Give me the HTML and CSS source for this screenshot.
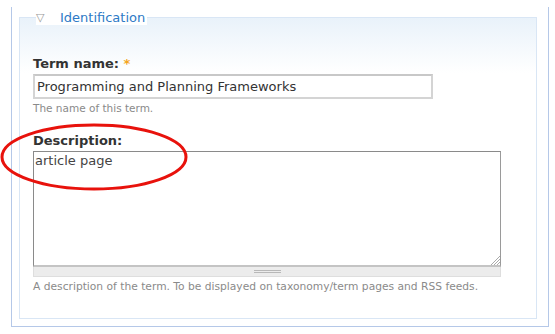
FILE: index.html
```html
<!DOCTYPE html>
<html>
<head>
<meta charset="utf-8">
<link rel="stylesheet" href="styles.css">
</head>
<body>
<div class="outer">
  <fieldset class="group">
    <legend class="legend"><span class="tri">&#9661;</span><span class="legend-text">Identification</span></legend>
    <div class="item">
      <label class="label">Term name: <span class="req">*</span></label>
      <div class="input">Programming and Planning Frameworks</div>
      <div class="desc">The name of this term.</div>
    </div>
    <div class="item item-desc">
      <label class="label">Description:</label>
      <div class="textarea">article page
        <svg class="resize" width="10" height="10" viewBox="0 0 10 10"><path d="M10 1 L1 10 M10 4 L4 10 M10 7 L7 10" stroke="#aaa" stroke-width="1"/></svg>
      </div>
      <div class="grippie"><span class="grip"></span></div>
      <div class="desc">A description of the term. To be displayed on taxonomy/term pages and RSS feeds.</div>
    </div>
  </fieldset>
</div>
<svg class="ellipse" width="200" height="80" viewBox="0 0 200 80"><ellipse cx="94" cy="36" rx="92" ry="32" fill="none" stroke="#e8120c" stroke-width="3"/></svg>
</body>
</html>
```
FILE: styles.css
```css
html, body {
  margin: 0;
  padding: 0;
  background: #fff;
  font-family: "DejaVu Sans", Verdana, sans-serif;
  color: #333;
}
body {
  width: 555px;
  height: 334px;
  position: relative;
  overflow: hidden;
}
.outer {
  margin: 7px 0 0 11px;
  width: 538px;
  height: 320px;
  border: 1px solid #b5c8e8;
  border-top: none;
  padding: 3px 11px 0 7px;
  box-sizing: border-box;
}
.group {
  margin: 0;
  padding: 0 0 0 13px;
  width: 518px;
  height: 309px;
  box-sizing: border-box;
  border: 1px solid #d9e6f5;
  background: linear-gradient(#e9f2fa 0, #ffffff 55px);
  position: relative;
}
.legend {
  padding: 0;
  margin-left: 3px;
  font-size: 13px;
  line-height: 14px;
  color: #2d7ac6;
  background: #fff;
}
.tri {
  display: inline-block;
  font-size: 11px;
  color: #999;
  width: 24px;
  text-align: left;
}
.legend-text {
  padding-right: 2px;
  position: relative;
  top: 1px;
}
.item {
  margin-top: 31px;
}
.label {
  display: block;
  font-weight: bold;
  font-size: 13px;
  line-height: 16px;
  color: #333;
}
.req {
  color: #f4a51c;
}
.input {
  margin-top: 2px;
  width: 400px;
  height: 25px;
  box-sizing: border-box;
  border: 2px solid #d4d4d4;
  border-top-color: #c8c8c8;
  padding: 0 0 0 2px;
  font-size: 13px;
  line-height: 21px;
  color: #333;
}
.desc {
  margin-top: 2px;
  font-size: 10.5px;
  line-height: 15px;
  color: #8a8a8a;
}
.item-desc {
  margin-top: 17px;
}
.textarea {
  margin-top: 2px;
  position: relative;
  width: 468px;
  height: 116px;
  box-sizing: border-box;
  border: 1px solid #8a8a8a;
  border-right-color: #9a9a9a;
  border-bottom: 2px solid #c4c4c4;
  padding: 0 0 0 1px;
  font-size: 13px;
  line-height: 18px;
  color: #444;
  background: #fff;
}
.resize {
  position: absolute;
  right: 0;
  bottom: 0;
}
.grippie {
  width: 468px;
  height: 10px;
  box-sizing: border-box;
  background: #ececec;
  border: 1px solid #dedede;
  border-top: none;
  display: flex;
  justify-content: center;
  align-items: center;
}
.grip {
  width: 27px;
  height: 3px;
  border-top: 1px solid #b8b8b8;
  border-bottom: 1px solid #b8b8b8;
  box-sizing: border-box;
}
.item-desc .desc {
  margin-top: 2px;
  font-size: 10.7px;
}
.ellipse {
  position: absolute;
  left: 0;
  top: 121px;
}
```
